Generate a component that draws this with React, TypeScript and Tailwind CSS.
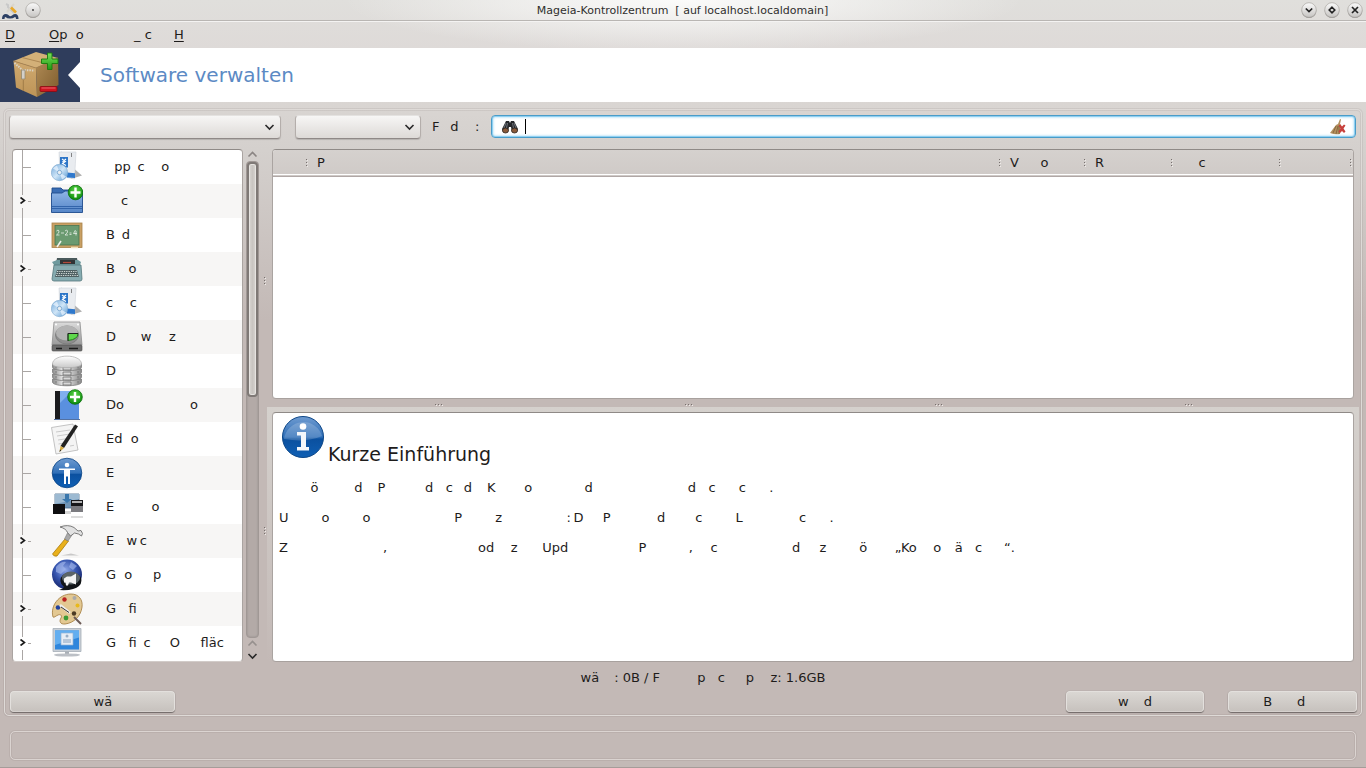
import type { ReactNode } from "react";

/* "~" stands for a thin space, so that gaps in labels can be set finely. */
const t = (s: string) => s.replace(/~/g, "\u2009");

function Defs() {
  return (
    <svg width="0" height="0" className="absolute" aria-hidden="true">
      <defs>
        <linearGradient id="blue" x1="0" y1="0" x2="0" y2="1">
          <stop offset="0" stopColor="#6f9bd0" />
          <stop offset="0.5" stopColor="#2f6fb8" />
          <stop offset="0.55" stopColor="#0b509f" />
          <stop offset="1" stopColor="#0f5fb4" />
        </linearGradient>
        <linearGradient id="folder" x1="0" y1="0" x2="0" y2="1">
          <stop offset="0" stopColor="#8fb5e6" />
          <stop offset="1" stopColor="#5686c8" />
        </linearGradient>
        <radialGradient id="green" cx="0.5" cy="0.35" r="0.65">
          <stop offset="0" stopColor="#5fd84a" />
          <stop offset="1" stopColor="#0b8a0b" />
        </radialGradient>
        <linearGradient id="silver" x1="0" y1="0" x2="1" y2="0">
          <stop offset="0" stopColor="#8d8d8d" />
          <stop offset="0.4" stopColor="#f2f2f2" />
          <stop offset="1" stopColor="#8a8a8a" />
        </linearGradient>
        <linearGradient id="plate" x1="0" y1="0" x2="0" y2="1">
          <stop offset="0" stopColor="#dcdcdc" />
          <stop offset="1" stopColor="#9a9a9a" />
        </linearGradient>
        <linearGradient id="dome" x1="0" y1="0" x2="0" y2="1">
          <stop offset="0" stopColor="#ffffff" />
          <stop offset="1" stopColor="#c9c9c9" />
        </linearGradient>
        <linearGradient id="cd" x1="0" y1="0" x2="1" y2="1">
          <stop offset="0" stopColor="#6fa7da" />
          <stop offset="0.5" stopColor="#cfe5f7" />
          <stop offset="1" stopColor="#4f93cf" />
        </linearGradient>
        <linearGradient id="knob" x1="0" y1="0" x2="0" y2="1">
          <stop offset="0" stopColor="#fafafa" />
          <stop offset="1" stopColor="#c6c4c2" />
        </linearGradient>
        <radialGradient id="globe" cx="0.45" cy="0.35" r="0.65">
          <stop offset="0" stopColor="#8ea6e6" />
          <stop offset="0.55" stopColor="#3554ae" />
          <stop offset="1" stopColor="#16256b" />
        </radialGradient>
        <linearGradient id="boxL" x1="0" y1="0" x2="0" y2="1">
          <stop offset="0" stopColor="#cfa96f" />
          <stop offset="1" stopColor="#bd9457" />
        </linearGradient>
        <linearGradient id="boxR" x1="0" y1="0" x2="1" y2="1">
          <stop offset="0" stopColor="#b18c56" />
          <stop offset="1" stopColor="#7d5b2c" />
        </linearGradient>
        <linearGradient id="plus" x1="0" y1="0" x2="0" y2="1">
          <stop offset="0" stopColor="#7be05a" />
          <stop offset="1" stopColor="#1f9a14" />
        </linearGradient>
      </defs>
    </svg>
  );
}

function Ico({ children }: { children: ReactNode }) {
  return (
    <svg width="32" height="32" viewBox="0 0 32 32" className="shrink-0" aria-hidden="true">
      {children}
    </svg>
  );
}

const Plus = ({ x, y }: { x: number; y: number }) => (
  <g transform={`translate(${x} ${y})`}>
    <circle r="7.3" fill="url(#green)" stroke="#0a6e0a" strokeWidth="0.8" />
    <path d="M-1.2-5h2.4v3.8H5v2.4H1.2V5h-2.4V1.2H-5v-2.4h3.8z" fill="#fff" />
  </g>
);

const Install = () => (
  <Ico>
    <path d="M20 28l11-3.500-7-6z" fill="#8f8f8f" opacity="0.7" />
    <path d="M8 2l3-1.500v21L8 24z" fill="#b9cbdc" />
    <path d="M8 1h17l-1.500 27L9 25z" fill="#e9ecf0" stroke="#cfd4da" strokeWidth="0.6" />
    <path d="M20.500 2v4" stroke="#777" strokeWidth="0.9" />
    <path d="M9 6h8v10.500H9z" fill="#2d76c8" />
    <path d="M11 8l3.500 2.500-3 2 3.500 2M15 8l-3.500 3" stroke="#fff" strokeWidth="1.100" fill="none" />
    <path d="M16 21.500l8 .8V27l-8-.5z" fill="#2f78cc" />
    <circle cx="8.500" cy="21.500" r="8.200" fill="url(#cd)" stroke="#7fa9cf" strokeWidth="0.6" />
    <path d="M8.500 21.500L2 17.500a7.500 7.500 0 014-3zM8.500 21.500l6.500 4a7.500 7.500 0 01-4 3z" fill="#eef7ff" opacity="0.7" />
    <circle cx="8.500" cy="21.500" r="2.200" fill="#e9eef2" stroke="#5b93c6" strokeWidth="0.7" />
  </Ico>
);

const FolderPlus = () => (
  <Ico>
    <path d="M1 8V3h9l2 2h18v7H1z" fill="#3a6db4" stroke="#1f4c8d" strokeWidth="0.9" />
    <path d="M.5 8H11l3-2h17.500v21.500H.5z" fill="url(#folder)" stroke="#1f4c8d" strokeWidth="0.9" />
    <path d="M1 21.500h30M1 23.500h30" stroke="#2d5fa6" strokeWidth="0.9" />
    <Plus x={24.500} y={7.500} />
  </Ico>
);

const Board = () => (
  <Ico>
    <rect x="1" y="4" width="30" height="24.500" fill="#c9a064" stroke="#a98148" strokeWidth="0.8" />
    <rect x="4" y="6.500" width="24" height="19.500" fill="#6a9a70" stroke="#4a7652" strokeWidth="0.8" />
    <path d="M5.500 12q2-2 2.500 0t-2.500 4h3M10 14h3M14 12q2-2 2.500 0T14 16h3M18.500 14h2M18.500 15.500h2M24.500 11l-2 3.500h3.500M25 12v4.500" stroke="#e6efe6" strokeWidth="0.8" fill="none" />
    <path d="M10 22l-4 6" stroke="#f3f3ee" strokeWidth="1.500" />
    <path d="M20 28.500h7" stroke="#f0ddb8" strokeWidth="1.500" />
  </Ico>
);

const Typewriter = () => (
  <Ico>
    <path d="M6 5h20l1 5H5z" fill="#4a5a5c" />
    <path d="M1 9l5-2h21l3 2-1 3H3z" fill="#6f9a9e" />
    <path d="M9 7h15v4H9z" fill="#303436" />
    <path d="M12 9.500h8" stroke="#b24a3c" strokeWidth="1.200" />
    <path d="M3 12h27l1 14q0 2-2 2H3q-2 0-2-2z" fill="#86abb0" stroke="#54777b" strokeWidth="0.8" />
    <path d="M6 17h20l2 7H4z" fill="#4e5f61" />
    <path d="M6 18.500h20M5.500 20.500h21M5 22.500h22" stroke="#cfd8d6" strokeWidth="1" strokeDasharray="1.300 1" />
  </Ico>
);

const Disk = () => (
  <Ico>
    <path d="M3 1h26l2 23H1z" fill="url(#plate)" stroke="#8e8e8e" strokeWidth="0.8" />
    <circle cx="5" cy="3.500" r="1" fill="#fff" />
    <circle cx="27" cy="3.500" r="1" fill="#fff" />
    <rect x="1" y="24" width="30" height="6" rx="1" fill="#6e6e6e" stroke="#4c4c4c" strokeWidth="0.6" />
    <path d="M5 27.500h6M18 27.500h9" stroke="#1b1b1b" strokeWidth="1.500" />
    <ellipse cx="16" cy="14" rx="11.500" ry="9" fill="#8d8d8d" stroke="#777" strokeWidth="0.8" />
    <ellipse cx="16" cy="12" rx="11" ry="7.500" fill="#b3b3b3" />
    <path d="M17 12.500h10q0 6-10 7z" fill="#5fd84c" stroke="#167a12" strokeWidth="0.9" />
    <path d="M17 20v-7.500h10" stroke="#222" strokeWidth="1" fill="none" />
  </Ico>
);

const Database = () => (
  <Ico>
    {[24, 19, 14, 9].map((y) => (
      <g key={y}>
        <path d={`M1.500 ${y}v3c0 5 29 5 29 0V${y}z`} fill="url(#silver)" stroke="#7d7d7d" strokeWidth="0.8" />
        <path d={`M12 ${y + 3}v3h8v-3zM5 ${y + 2}v2.500M27 ${y + 2}v2.500`} fill="#d8d8d8" stroke="#6c6c6c" strokeWidth="0.8" />
      </g>
    ))}
    <path d="M1.500 9c0-10.500 29-10.500 29 0 0 5-29 5-29 0z" fill="url(#dome)" stroke="#a9a9a9" strokeWidth="0.7" />
  </Ico>
);

const Book = () => (
  <Ico>
    <path d="M4 2h24v28H4z" fill="#3d77cf" />
    <path d="M4 2h5v28H4z" fill="#1b1b1d" />
    <path d="M9 2h19v28H9z" fill="#5a90df" />
    <path d="M9 2h12L9 14z" fill="#90bcf2" opacity="0.7" />
    <path d="M3 30.500h26" stroke="#2a4f8c" strokeWidth="0.8" />
    <Plus x={24} y={8} />
  </Ico>
);

const Editor = () => (
  <Ico>
    <path d="M.500 4.500L22 1l5 26-22 4z" fill="#f4f4f4" stroke="#b5b5b5" strokeWidth="0.8" />
    <path d="M5 9l14-2M6 13l13-2M7 17l10-1.500M7.500 21l8-1.300M19 23l4-.7" stroke="#c5c5c5" strokeWidth="0.9" />
    <path d="M24 1.500l3 1.700L13 25l-3.500-2z" fill="#222" />
    <path d="M9.500 23l3.500 2-4.500 4z" fill="#d4a93c" />
    <path d="M9 26.500l1.200.8L8.500 29z" fill="#222" />
  </Ico>
);

const Access = () => (
  <Ico>
    <circle cx="16" cy="16" r="14.800" fill="url(#blue)" stroke="#0b4484" strokeWidth="0.8" />
    <circle cx="16" cy="8" r="2.300" fill="#fff" />
    <path d="M8 11.500h16V13h-5v14h-2v-7.500h-2V27h-2V13H8z" fill="#fff" />
  </Ico>
);

const Emulator = () => (
  <Ico>
    <path d="M4 3h24v14H4z" fill="#6f94b6" stroke="#4a6a8b" strokeWidth="0.8" />
    <path d="M4 3h24v5L4 13z" fill="#9dbad2" />
    <path d="M14 3h4v5h3l-5 4-5-4h3z" fill="#3b78ad" />
    <path d="M2 13h12v10H2z" fill="#0f0f11" />
    <path d="M14 20h6v3h-6z" fill="#d4d4d4" />
    <path d="M20 9h12v12H20z" fill="#17171a" />
    <path d="M21 11h10" stroke="#e9e9e9" strokeWidth="1.500" />
    <path d="M20 15h12v6H20z" fill="#7b7b80" />
    <path d="M20 26h12" stroke="#d0d0d0" strokeWidth="1.500" />
  </Ico>
);

const Hammer = () => (
  <Ico>
    <path d="M10 30.500h18l-8-2z" fill="#aaa" opacity="0.6" />
    <path d="M14 14l3.500 2L6 31q-3 1-4.500-2z" fill="#e9b11c" stroke="#a87a0c" strokeWidth="0.8" />
    <path d="M17 7l4 3-4 6-3.500-2z" fill="#a9a9a9" stroke="#777" strokeWidth="0.6" />
    <path d="M9 2q8-3 14 .5l4 3.500 3-.5 1.500 3-1 2.500-3-2-4-1-4 3-3-3.500Q15 3.500 9 2z" fill="#e2e2e2" stroke="#6e6e6e" strokeWidth="0.9" />
  </Ico>
);

const Globe = () => (
  <Ico>
    <circle cx="16" cy="15.500" r="15" fill="url(#globe)" />
    <path d="M5 8q5-6 10-5l-3 4 3 3-5 5-5-2zM20 3l6 4-4 4-4-3z" fill="#a9bdf0" opacity="0.6" />
    <path d="M8 31q4-1 5-3a10.500 8.500 0 1115-1q-5 5-20 4z" fill="#111418" />
    <ellipse cx="20" cy="19" rx="9" ry="6.500" fill="#5b6468" />
    <path d="M13 19.500l3-2h4l5-3v11l-5-2h-2l-1 3h-2l-.500-3H13z" fill="#f2f2f2" />
  </Ico>
);

const Palette = () => (
  <Ico>
    <path d="M2 24C-1 13 8 1 20 1c8 0 12 6 11 13-1 9-8 16-17 17-5 .5-6-3-4-6 1.500-3-1-4-3-3-2 .8-4 3-5 2z" fill="#e3c892" stroke="#a9854a" strokeWidth="0.9" />
    <circle cx="13.500" cy="6.500" r="2.200" fill="#b92020" />
    <circle cx="23.500" cy="5" r="2" fill="#a9a9a9" />
    <circle cx="26.500" cy="12.500" r="2" fill="#e8b91c" />
    <circle cx="7" cy="14.500" r="2.300" fill="#20409c" />
    <circle cx="15" cy="25" r="2.400" fill="#3b9a35" />
    <circle cx="23" cy="20.500" r="2.200" fill="#4c3a22" />
    <path d="M9 12l10 8" stroke="#eee" strokeWidth="2.600" />
    <path d="M10 14l8 5.500" stroke="#333" strokeWidth="1" />
    <path d="M23 24l7 7" stroke="#6b5a55" strokeWidth="2" />
  </Ico>
);

const Monitor = () => (
  <Ico>
    <path d="M2 1.500h28v23H2z" fill="#c9cfd6" stroke="#a6aeb8" strokeWidth="0.8" />
    <path d="M4 3.500h24v19H4z" fill="#2f86dc" />
    <path d="M4 3.500h24v7L4 18z" fill="#62aef0" />
    <path d="M10 6h12v12H10z" fill="#e6edf5" stroke="#8fb2d6" strokeWidth="0.7" />
    <path d="M12 12h8v4h-8z" fill="#b7c7d9" />
    <circle cx="16" cy="9" r="1.500" fill="#98aec6" />
    <path d="M14 24.500h4V27h-4z" fill="#a9afb6" />
    <ellipse cx="16" cy="28" rx="13" ry="1.600" fill="#bcc0c6" />
  </Ico>
);

type Group = { label: string; Icon: () => ReactNode; open?: boolean };
const groups: Group[] = [
  { label: "  pp ~c    o", Icon: Install },
  { label: "   ~c", Icon: FolderPlus, open: true },
  { label: "B ~d", Icon: Board },
  { label: "B  ~~o", Icon: Typewriter, open: true },
  { label: "c    c", Icon: Install },
  { label: "D      w   ~~z", Icon: Disk },
  { label: "D", Icon: Database },
  { label: "Do                o", Icon: Book },
  { label: "Ed  o", Icon: Editor },
  { label: "E", Icon: Access },
  { label: "E         o", Icon: Emulator },
  { label: "E   w~c", Icon: Hammer, open: true },
  { label: "G  o     p", Icon: Globe },
  { label: "G   fi", Icon: Palette, open: true },
  { label: "G   fi ~c    ~O     fläc", Icon: Monitor, open: true },
];

const columns = [
  { label: "", w: "w-[36px]" },
  { label: "P", w: "" },
  { label: "V    ~~o", w: "w-[85px]" },
  { label: "R", w: "w-[87px]" },
  { label: "    c", w: "w-[108px]" },
  { label: "", w: "w-[71px]" },
];

const paragraphs = [
  "       ~ö        ~d   ~P         ~d   c  ~d   ~K       o            ~d                       d   c     ~c     ~.",
  "U        o        o                   ~~P        z               ~:~D    ~P          ~~d      ~~c        L             ~c     ~.",
  "Z                       ,                      od    z      Upd                 P         ~~,   ~~c                  d    ~z        ö      ~„Ko    o  ~~ä   c    ~~“.",
];

function Branch({ open }: { open?: boolean }) {
  return (
    <svg width="20" height="34" viewBox="0 0 20 34" fill="none" className="shrink-0" aria-hidden="true">
      {open ? (
        <>
          <path d="M9.500 0v11M9.500 24v10M15 17.500h3" stroke="#aaa6a4" />
          <path d="M7.500 13.500l4 3-4 3" stroke="#1c1c1c" strokeWidth="1.600" />
        </>
      ) : (
        <path d="M9.500 0v34M10 17.500h8" stroke="#aaa6a4" />
      )}
    </svg>
  );
}

function Dots({ vertical }: { vertical?: boolean }) {
  return (
    <svg width={vertical ? 3 : 9} height={vertical ? 9 : 3} className="shrink-0" aria-hidden="true">
      {[1, 4, 7].map((p) => (
        <g key={p}>
          <rect x={vertical ? 1 : p + 1} y={vertical ? p + 1 : 1} width="1" height="1" fill="#efecea" />
          <rect x={vertical ? 0 : p} y={vertical ? p : 0} width="1" height="1" fill="#77706e" />
        </g>
      ))}
    </svg>
  );
}

function Chevron({ up, color = "#2a2a2a" }: { up?: boolean; color?: string }) {
  return (
    <svg width="11" height="12" viewBox="0 0 11 12" fill="none" aria-hidden="true">
      <path d={up ? "M1.500 7.500l4-4 4 4" : "M1.500 4l4 4 4-4"} stroke={color} strokeWidth="1.600" />
    </svg>
  );
}

function Combo({ label, width }: { label: string; width: string }) {
  return (
    <div className={`relative h-6 ${width}`}>
      <select
        aria-label={label}
        className="h-6 w-full appearance-none rounded-[4px] border border-[#b4aeab] border-t-[#e4e2e0] border-b-[#8f8987] bg-linear-to-b from-[#f7f6f5] to-[#dddad7] px-2 text-[13px] shadow-[0_1px_1px_rgba(0,0,0,0.15)] outline-none"
      >
        <option></option>
      </select>
      <span className="pointer-events-none absolute top-[6px] right-[6px]">
        <Chevron />
      </span>
    </div>
  );
}

function Knob({ label, children }: { label: string; children: ReactNode }) {
  return (
    <button type="button" aria-label={label} className="size-4">
      <svg width="16" height="17" viewBox="0 0 16 17" fill="none">
        <circle cx="8" cy="8.800" r="7.300" fill="#8f8c8a" />
        <circle cx="8" cy="8" r="7.300" fill="url(#knob)" stroke="#aaa7a4" strokeWidth="0.7" />
        {children}
      </svg>
    </button>
  );
}

function PushButton({ children, width }: { children: string; width: string }) {
  return (
    <button
      type="button"
      className={`h-[21px] rounded-[4px] border border-[#e3e0dd] border-b-[#d6d1ce] bg-linear-to-b from-[#dad7d3] to-[#c7c2be] text-center text-[13px] leading-[20px] whitespace-pre shadow-[0_1px_1px_#6f6866,0_0_1px_#8f8785] ${width}`}
    >
      {t(children)}
    </button>
  );
}

const menu = [
  { key: "D", rest: "", width: "w-[44px]" },
  { key: "O", rest: "p  o", width: "w-[85px]" },
  { key: "", rest: "_ c", width: "w-[40px]" },
  { key: "H", rest: "", width: "w-[20px]" },
];

export default function App() {
  return (
    <div className="flex h-screen flex-col bg-[#c3b9b6] bg-[radial-gradient(340px_52px_at_50%_0,#fbfbfa,transparent),linear-gradient(#e0dfdc,#dedad8_48px,#d9d5d2_105px,#d4d0cd_150px,#c3b9b6_320px)] font-['DejaVu_Sans',sans-serif] text-[13px] leading-[15px] text-[#1e1c1b]">
      <Defs />
      <header>
        <div className="flex h-[21px] items-center border-b border-[#b9b6b3] pr-[3px] pl-[2px]">
          <div className="flex flex-1 items-center gap-[6px]">
            <svg width="17" height="17" viewBox="0 0 17 17" aria-hidden="true">
              <path d="M4 2l2 1v2l6 6" stroke="#c9c9c9" strokeWidth="2" fill="none" />
              <path d="M12 2L5 10" stroke="#d9d5cc" strokeWidth="2" />
              <path d="M9 5.500l5 5" stroke="#e9a92a" strokeWidth="2.600" />
              <path d="M0 17q0-5 4-5 2 0 3 1.500t3 0Q11 12 13 12q3.500 0 3.500 5h-2.500q0-2-1-2-2 1.500-5 1.500T3.500 15q-1 0-1 2z" fill="#2c3f63" />
            </svg>
            <Knob label="Fenstermenü">
              <circle cx="8" cy="8" r="0.900" fill="#333" />
            </Knob>
          </div>
          <h1 className="text-[11px] whitespace-pre text-[#2f2e2d]">{"Mageia-Kontrollzentrum  [ auf localhost.localdomain]"}</h1>
          <div className="flex flex-1 items-center justify-end gap-[7px]">
            <Knob label="Minimieren">
              <path d="M4.800 6.500l3.200 3 3.200-3" stroke="#222" strokeWidth="1.700" />
            </Knob>
            <Knob label="Maximieren">
              <path d="M8 5.200l2.800 2.800L8 10.800 5.200 8z" stroke="#222" strokeWidth="1.600" />
            </Knob>
            <Knob label="Schließen">
              <path d="M5 5l6 6M11 5l-6 6" stroke="#222" strokeWidth="1.700" />
            </Knob>
          </div>
        </div>
        <nav className="flex h-[27px] items-center border-t border-[#f4f3f2] pb-[2px] pl-[5px]">
          {menu.map((m) => (
            <button key={m.key + m.rest} type="button" className={`text-left whitespace-pre ${m.width}`}>
              <span className="underline underline-offset-2">{m.key}</span>
              {m.rest}
            </button>
          ))}
        </nav>
        <div className="flex h-[54px] items-center bg-white">
          <svg width="80" height="54" viewBox="0 0 80 54" aria-hidden="true">
            <path d="M0 0h80v14L68 27l12 13v14H0z" fill="#2f3d5c" />
            <path d="M13.500 13L36 4l22 6-22 10z" fill="#d3b078" />
            <path d="M13.500 13L36 20l1 29-21-9.500z" fill="url(#boxL)" />
            <path d="M36 20l22-10 .5 27L37 49z" fill="url(#boxR)" />
            <path d="M22 9.500L46 15.500M13.500 13L36 20l22-10" stroke="#a98350" strokeWidth="0.9" fill="none" />
            <path d="M14.500 15l8 7 12 .5" stroke="#d9d2c4" strokeWidth="2" strokeDasharray="1.500 1" fill="none" />
            <path d="M21.500 22h3.500v9h-3.500z" fill="#d3d0ca" stroke="#8d8268" strokeWidth="0.7" />
            <path d="M23.300 32v11" stroke="#a07c48" strokeWidth="1" />
            <path d="M47.500 5h4.500v6h6v4.500h-6v6h-4.500v-6h-6V11h6z" fill="url(#plus)" stroke="#167c0c" strokeWidth="0.9" strokeLinejoin="round" />
            <rect x="40" y="38.500" width="17" height="5" rx="1" fill="#cf1420" stroke="#8a0a12" strokeWidth="0.8" />
            <path d="M41.500 40h14" stroke="#e8656c" strokeWidth="1" />
          </svg>
          <h2 className="pl-5 text-[20px] leading-[24px] text-[#5c8ac4]">Software verwalten</h2>
        </div>
      </header>

      <main className="mx-1 mt-[7px] flex min-h-0 flex-1 flex-col rounded-[5px] border border-[#dedad7] pt-[5px] pb-[3px] shadow-[0_0_0_1px_rgba(120,110,105,0.12),inset_0_0_0_1px_rgba(120,110,105,0.12)]">
        <div className="flex items-start pr-[5px] pl-[4px]">
          <Combo label="Paketart" width="w-[272px]" />
          <div className="w-[14px]" />
          <Combo label="Suchbereich" width="w-[126px]" />
          <label htmlFor="find" className="w-[70px] pl-[11px] leading-[23px] whitespace-pre">
            {t("F  ~d    :")}
          </label>
          <div className="flex h-[23px] flex-1 items-center rounded-[4px] border border-[#4a9cc8] bg-white pr-[9px] pl-[9px] shadow-[inset_0_0_0_1px_#8fd0f2,inset_0_0_2px_2px_#cdebfa]">
            <svg width="18" height="14" viewBox="0 0 18 14" aria-hidden="true">
              <path d="M5 1h3l1 2 1-2h3l4 8-1 3h-5l-1-5H8l-1 5H2L1 9z" fill="#26282b" />
              <path d="M5 3L3 8M13 3l2 5M6.500 3l-1 5M11.500 3l1 5" stroke="#757b82" strokeWidth="0.900" />
              <ellipse cx="4.500" cy="10.500" rx="3" ry="2.500" fill="#8a5a3a" stroke="#2a2420" strokeWidth="0.800" />
              <ellipse cx="13.500" cy="10.500" rx="3" ry="2.500" fill="#8a5a3a" stroke="#2a2420" strokeWidth="0.800" />
            </svg>
            <span className="ml-[6px] h-[15px] w-px bg-black" />
            <input id="find" type="text" className="min-w-0 flex-1 bg-transparent caret-transparent outline-none" />
            <button type="button" aria-label="Suche leeren">
              <svg width="16" height="16" viewBox="0 0 16 16" aria-hidden="true">
                <path d="M10 0l1 .5-1 4.500 1 1-1 9q-5 1-10-1l6-8 2-1z" fill="#b28f5e" />
                <path d="M6 7l-3 7M8 7l-2 8M9 7l0 8" stroke="#7e6038" strokeWidth="0.800" />
                <path d="M8.500 6.500l2-1 1.500 2 2-2 1.500 1-2 3 2 3-1.500 1.500-2-2-2 2-1.500-1.500 2-3z" fill="#c8403c" />
              </svg>
            </button>
          </div>
        </div>

        <div className="mt-[10px] flex min-h-0 flex-1 pr-[2px] pl-[7px]">
          <ul className="w-[231px] overflow-y-auto rounded-[4px] border border-[#aaa4a1] border-t-[#8f8a87] border-b-[#d2ccc9] bg-white [scrollbar-width:none]">
            {groups.map(({ label, Icon, open }, i) => (
              <li key={i} className="flex h-[34px] items-center even:bg-[#f7f6f5]">
                <Branch open={open} />
                <div className="w-[18px]" />
                <Icon />
                <span className="pb-[2px] pl-[23px] whitespace-pre">{t(label)}</span>
              </li>
            ))}
          </ul>

          <div className="ml-[3px] flex w-[13px] flex-col items-center">
            <Chevron up color="#8b8583" />
            <div className="min-h-0 w-full flex-1 rounded-[4px] border border-[#a09895] bg-[#b3aaa7] shadow-[inset_0_0_2px_#8f8886]">
              <div className="h-[49.5%] rounded-[4px] border-2 border-[#7f7976] bg-linear-to-r from-[#d9d6d2] via-[#c9c5c1] to-[#d9d6d2] shadow-[inset_0_0_0_1px_#e6e3e0]" />
            </div>
            <Chevron up color="#96908e" />
            <Chevron />
          </div>

          <div className="flex w-[8px] flex-col items-end justify-center gap-[241px] overflow-hidden">
            <Dots vertical />
            <Dots vertical />
          </div>

          <div className="flex min-w-0 flex-1 flex-col">
            <div className="mx-[5px] min-h-0 flex-1 basis-0 overflow-hidden rounded-[4px] border border-[#aaa4a1] border-t-[#8f8a87] border-b-[#a8a19e] bg-white">
              <table className="w-full table-fixed border-collapse">
                <thead>
                  <tr className="bg-linear-to-b from-[#d5d1ce] to-[#cfcac7]">
                    {columns.map((c, i) => (
                      <th key={i} scope="col" className={`h-[26px] border-b border-[#b0a7a5] p-0 text-left font-normal ${c.w}`}>
                        <div className="flex h-[25px] items-center justify-between border-b border-white pl-[8px]">
                          <span className="pt-px whitespace-pre">{t(c.label)}</span>
                          <Dots vertical />
                        </div>
                      </th>
                    ))}
                  </tr>
                </thead>
                <tbody />
              </table>
            </div>
            <div className="flex h-[8px] items-end justify-center gap-[241px] overflow-hidden">
              <Dots />
              <Dots />
              <Dots />
              <Dots />
            </div>
            <div className="flex min-h-0 grow basis-[7px] flex-col bg-linear-to-b from-[#d5d1cd] to-[#c3b9b6] px-[5px] pt-[5px]">
              <article className="min-h-0 flex-1 overflow-hidden rounded-[4px] border border-[#aaa4a1] border-t-[#8f8a87] border-b-[#a8a19e] bg-white pl-[6px]">
                <div className="flex items-end gap-[4px] pt-[2px] pl-[3px]">
                  <svg width="42" height="44" viewBox="0 0 42 44" className="mb-[6px]" aria-hidden="true">
                    <circle cx="21" cy="22" r="20.500" fill="url(#blue)" stroke="#0c4687" />
                    <path d="M2 24a19.500 19.500 0 0138-3Q24 28 2 24z" fill="#fff" opacity="0.180" />
                    <circle cx="21" cy="11.500" r="3.300" fill="#fff" />
                    <path d="M15 17h9v15h3v3.500H15V32h4V20.500h-4z" fill="#f3f6fa" />
                  </svg>
                  <h3 className="text-[19px] leading-[22px]">Kurze Einführung</h3>
                </div>
                <div className="pt-[15px]">
                  {paragraphs.map((p) => (
                    <p key={p} className="mb-[15px] whitespace-pre">
                      {t(p)}
                    </p>
                  ))}
                </div>
              </article>
            </div>
          </div>
        </div>

        <p className="h-[29px] pt-[8px] pl-[40px] text-center whitespace-pre">
          {t("wä   ~: 0B / F         p   c     p    z: 1.6GB")}
        </p>
        <div className="flex justify-between pr-[4px] pl-[5px]">
          <PushButton width="w-[165px]">{"     wä"}</PushButton>
          <div className="flex gap-6">
            <PushButton width="w-[138px]">{"w   ~d"}</PushButton>
            <PushButton width="w-[129px]">{"B      d    "}</PushButton>
          </div>
        </div>
      </main>

      <footer className="mt-[15px] border-b border-[#a59c99] pb-[7px]">
        <div className="mx-[10px] h-[29px] rounded-[5px] border border-[#dbd4d1] shadow-[0_0_0_1px_rgba(120,110,105,0.12),inset_0_0_0_1px_rgba(120,110,105,0.12)]" />
      </footer>
    </div>
  );
}
